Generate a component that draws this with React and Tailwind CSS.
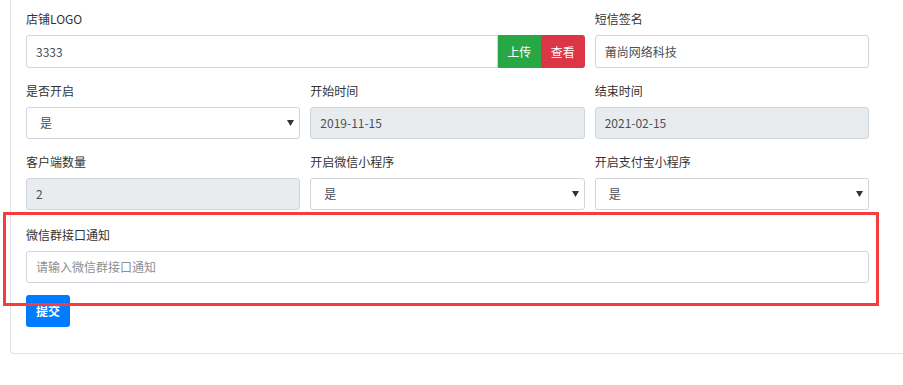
import React from "react";

const font = { fontFamily: '"Noto Sans CJK SC", "Noto Sans", sans-serif' };

function Label({ children, className = "" }) {
  return (
    <div className={"h-[18px] leading-[18px] text-[12px] text-[#333] mb-[7px] " + className}>
      {children}
    </div>
  );
}

function TextBox({ value, disabled, placeholder, className = "" }) {
  return (
    <div
      className={
        "h-[32px] rounded-[3px] border border-[#ced4da] flex items-center pl-[9px] text-[12px] " +
        (disabled ? "bg-[#e9ecef] " : "bg-white ") +
        (placeholder ? "text-[#8a8f94] " : "text-[#495057] ") +
        className
      }
    >
      {value || placeholder}
    </div>
  );
}

function SelectBox({ value }) {
  return (
    <div className="h-[32px] rounded-[3px] border border-[#ced4da] bg-white flex items-center justify-between pl-[13px] pr-[5px] text-[12px] text-[#495057]">
      <span>{value}</span>
      <svg width="7" height="6" viewBox="0 0 7 6">
        <polygon points="0,0 7,0 3.5,6" fill="#333" />
      </svg>
    </div>
  );
}

export default function App() {
  return (
    <div className="relative w-[903px] h-[385px] overflow-hidden bg-white" style={font}>
      <div className="ml-[10px] w-[1000px] border-l border-b border-[#dee2e6] rounded-bl-[4px] pl-[15px] pt-[10px] pb-[26px]">
        <div className="w-[843px]">
          {/* Row 1 */}
          <div className="grid grid-cols-3 gap-x-[10px] mb-[14px]">
            <div className="col-span-2">
              <Label>店铺LOGO</Label>
              <div className="flex h-[33px]">
                <div className="flex-1 rounded-l-[3px] border border-[#ced4da] flex items-center pl-[9px] text-[12px] text-[#495057]">
                  3333
                </div>
                <div className="w-[43px] bg-[#28a745] text-white text-[12px] flex items-center justify-center">
                  上传
                </div>
                <div className="w-[44px] bg-[#dc3545] text-white text-[12px] flex items-center justify-center rounded-r-[3px]">
                  查看
                </div>
              </div>
            </div>
            <div>
              <Label>短信签名</Label>
              <div className="h-[33px] rounded-[3px] border border-[#ced4da] flex items-center pl-[9px] text-[12px] text-[#495057]">
                莆尚网络科技
              </div>
            </div>
          </div>

          {/* Row 2 */}
          <div className="grid grid-cols-3 gap-x-[10px] mb-[14px]">
            <div>
              <Label>是否开启</Label>
              <SelectBox value="是" />
            </div>
            <div>
              <Label>开始时间</Label>
              <TextBox value="2019-11-15" disabled />
            </div>
            <div>
              <Label>结束时间</Label>
              <TextBox value="2021-02-15" disabled />
            </div>
          </div>

          {/* Row 3 */}
          <div className="grid grid-cols-3 gap-x-[10px] mb-[16px]">
            <div>
              <Label>客户端数量</Label>
              <TextBox value="2" disabled />
            </div>
            <div>
              <Label>开启微信小程序</Label>
              <SelectBox value="是" />
            </div>
            <div>
              <Label>开启支付宝小程序</Label>
              <SelectBox value="是" />
            </div>
          </div>

          {/* Row 4 */}
          <div>
            <Label>微信群接口通知</Label>
            <TextBox placeholder="请输入微信群接口通知" />
          </div>

          <div className="mt-[12px]">
            <div className="w-[44px] h-[32px] rounded-[3px] bg-[#007bff] text-white text-[12px] font-bold flex items-center justify-center">
              提交
            </div>
          </div>
        </div>
      </div>

      {/* red annotation box */}
      <div className="absolute left-[3px] top-[212px] w-[876px] h-[94px] border-[3px] border-[#f53d3d] pointer-events-none" />
    </div>
  );
}
